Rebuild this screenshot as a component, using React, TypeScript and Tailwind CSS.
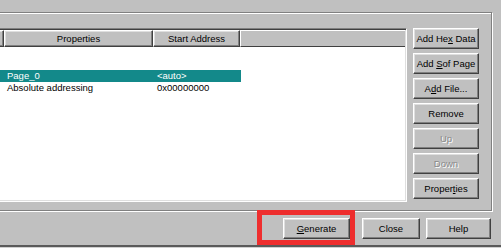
import type { ReactNode } from 'react';

const raised =
  'border border-t-white border-l-white border-r-[#404040] border-b-[#404040] shadow-[inset_-1px_-1px_0_#808080,inset_1px_1px_0_#dfdfdf]';

function Btn({ children, disabled = false, className = '' }: { children: ReactNode; disabled?: boolean; className?: string }) {
  return (
    <div
      className={`h-[21px] flex items-center justify-center bg-[#c0c0c0] ${raised} ${
        disabled ? 'text-[#8a8a8a] [text-shadow:1px_1px_0_#ffffff]' : 'text-black'
      } ${className}`}
    >
      <span className="whitespace-pre">{children}</span>
    </div>
  );
}

export default function App() {
  return (
    <div className="relative w-[501px] h-[248px] overflow-hidden bg-[#c0c0c0] text-[9.5px] leading-none [font-family:'Liberation_Sans',Arial,sans-serif] flex flex-col">
      {/* group box */}
      <div className="mt-[12px] ml-[-10px] mr-[9px] h-[199px] border border-[#808080] shadow-[1px_1px_0_#ffffff,inset_1px_1px_0_#ffffff] flex pt-[15px] pr-[12px]">
        {/* list view */}
        <div className="flex-1 h-[174px] border border-t-[#808080] border-l-[#808080] border-r-white border-b-white shadow-[inset_1px_1px_0_#404040,inset_-1px_-1px_0_#dfdfdf] bg-white p-[1px] flex flex-col">
          <div className="flex h-[17px] bg-[#c0c0c0] shrink-0">
            <div className={`w-[11px] ${raised}`} />
            <div className={`w-[149px] flex items-center justify-center ${raised}`}>Properties</div>
            <div className={`w-[87px] flex items-center justify-center ${raised}`}>Start Address</div>
            <div className={`flex-1 ${raised} shadow-none border-r-0`} />
          </div>
          <div className="pt-[23px] flex flex-col">
            <div className="flex h-[12px] w-[248px] items-center bg-[#13898a] text-white">
              <span className="w-[164px] pl-[14px]">Page_0</span>
              <span>&lt;auto&gt;</span>
            </div>
            <div className="flex h-[12px] items-center text-black">
              <span className="w-[164px] pl-[14px]">Absolute addressing</span>
              <span>0x00000000</span>
            </div>
          </div>
        </div>
        {/* side buttons */}
        <div className="w-[66px] ml-[6px] flex flex-col gap-[4px]">
          <Btn>Add He<u>x</u> Data</Btn>
          <Btn>Add <u>S</u>of Page</Btn>
          <Btn>A<u>d</u>d File...</Btn>
          <Btn>Remove</Btn>
          <Btn disabled>Up</Btn>
          <Btn disabled>Down</Btn>
          <Btn>Proper<u>t</u>ies</Btn>
        </div>
      </div>

      {/* bottom buttons */}
      <div className="flex mt-[7px] pl-[283px]">
        <Btn className="w-[67px]"><u>G</u>enerate</Btn>
        <Btn className="w-[58px] ml-[12px]">Close</Btn>
        <Btn className="w-[65px] ml-[6px]">Help</Btn>
      </div>

      <div className="mt-[6px] h-[2px] bg-[#5a5a5a]" />
      <div className="flex-1 bg-[#d0d0d0]" />

      {/* red highlight box */}
      <div className="absolute left-[257px] top-[210px] w-[98px] h-[35px] border-[5px] border-[#ee2e2e]" />
    </div>
  );
}
